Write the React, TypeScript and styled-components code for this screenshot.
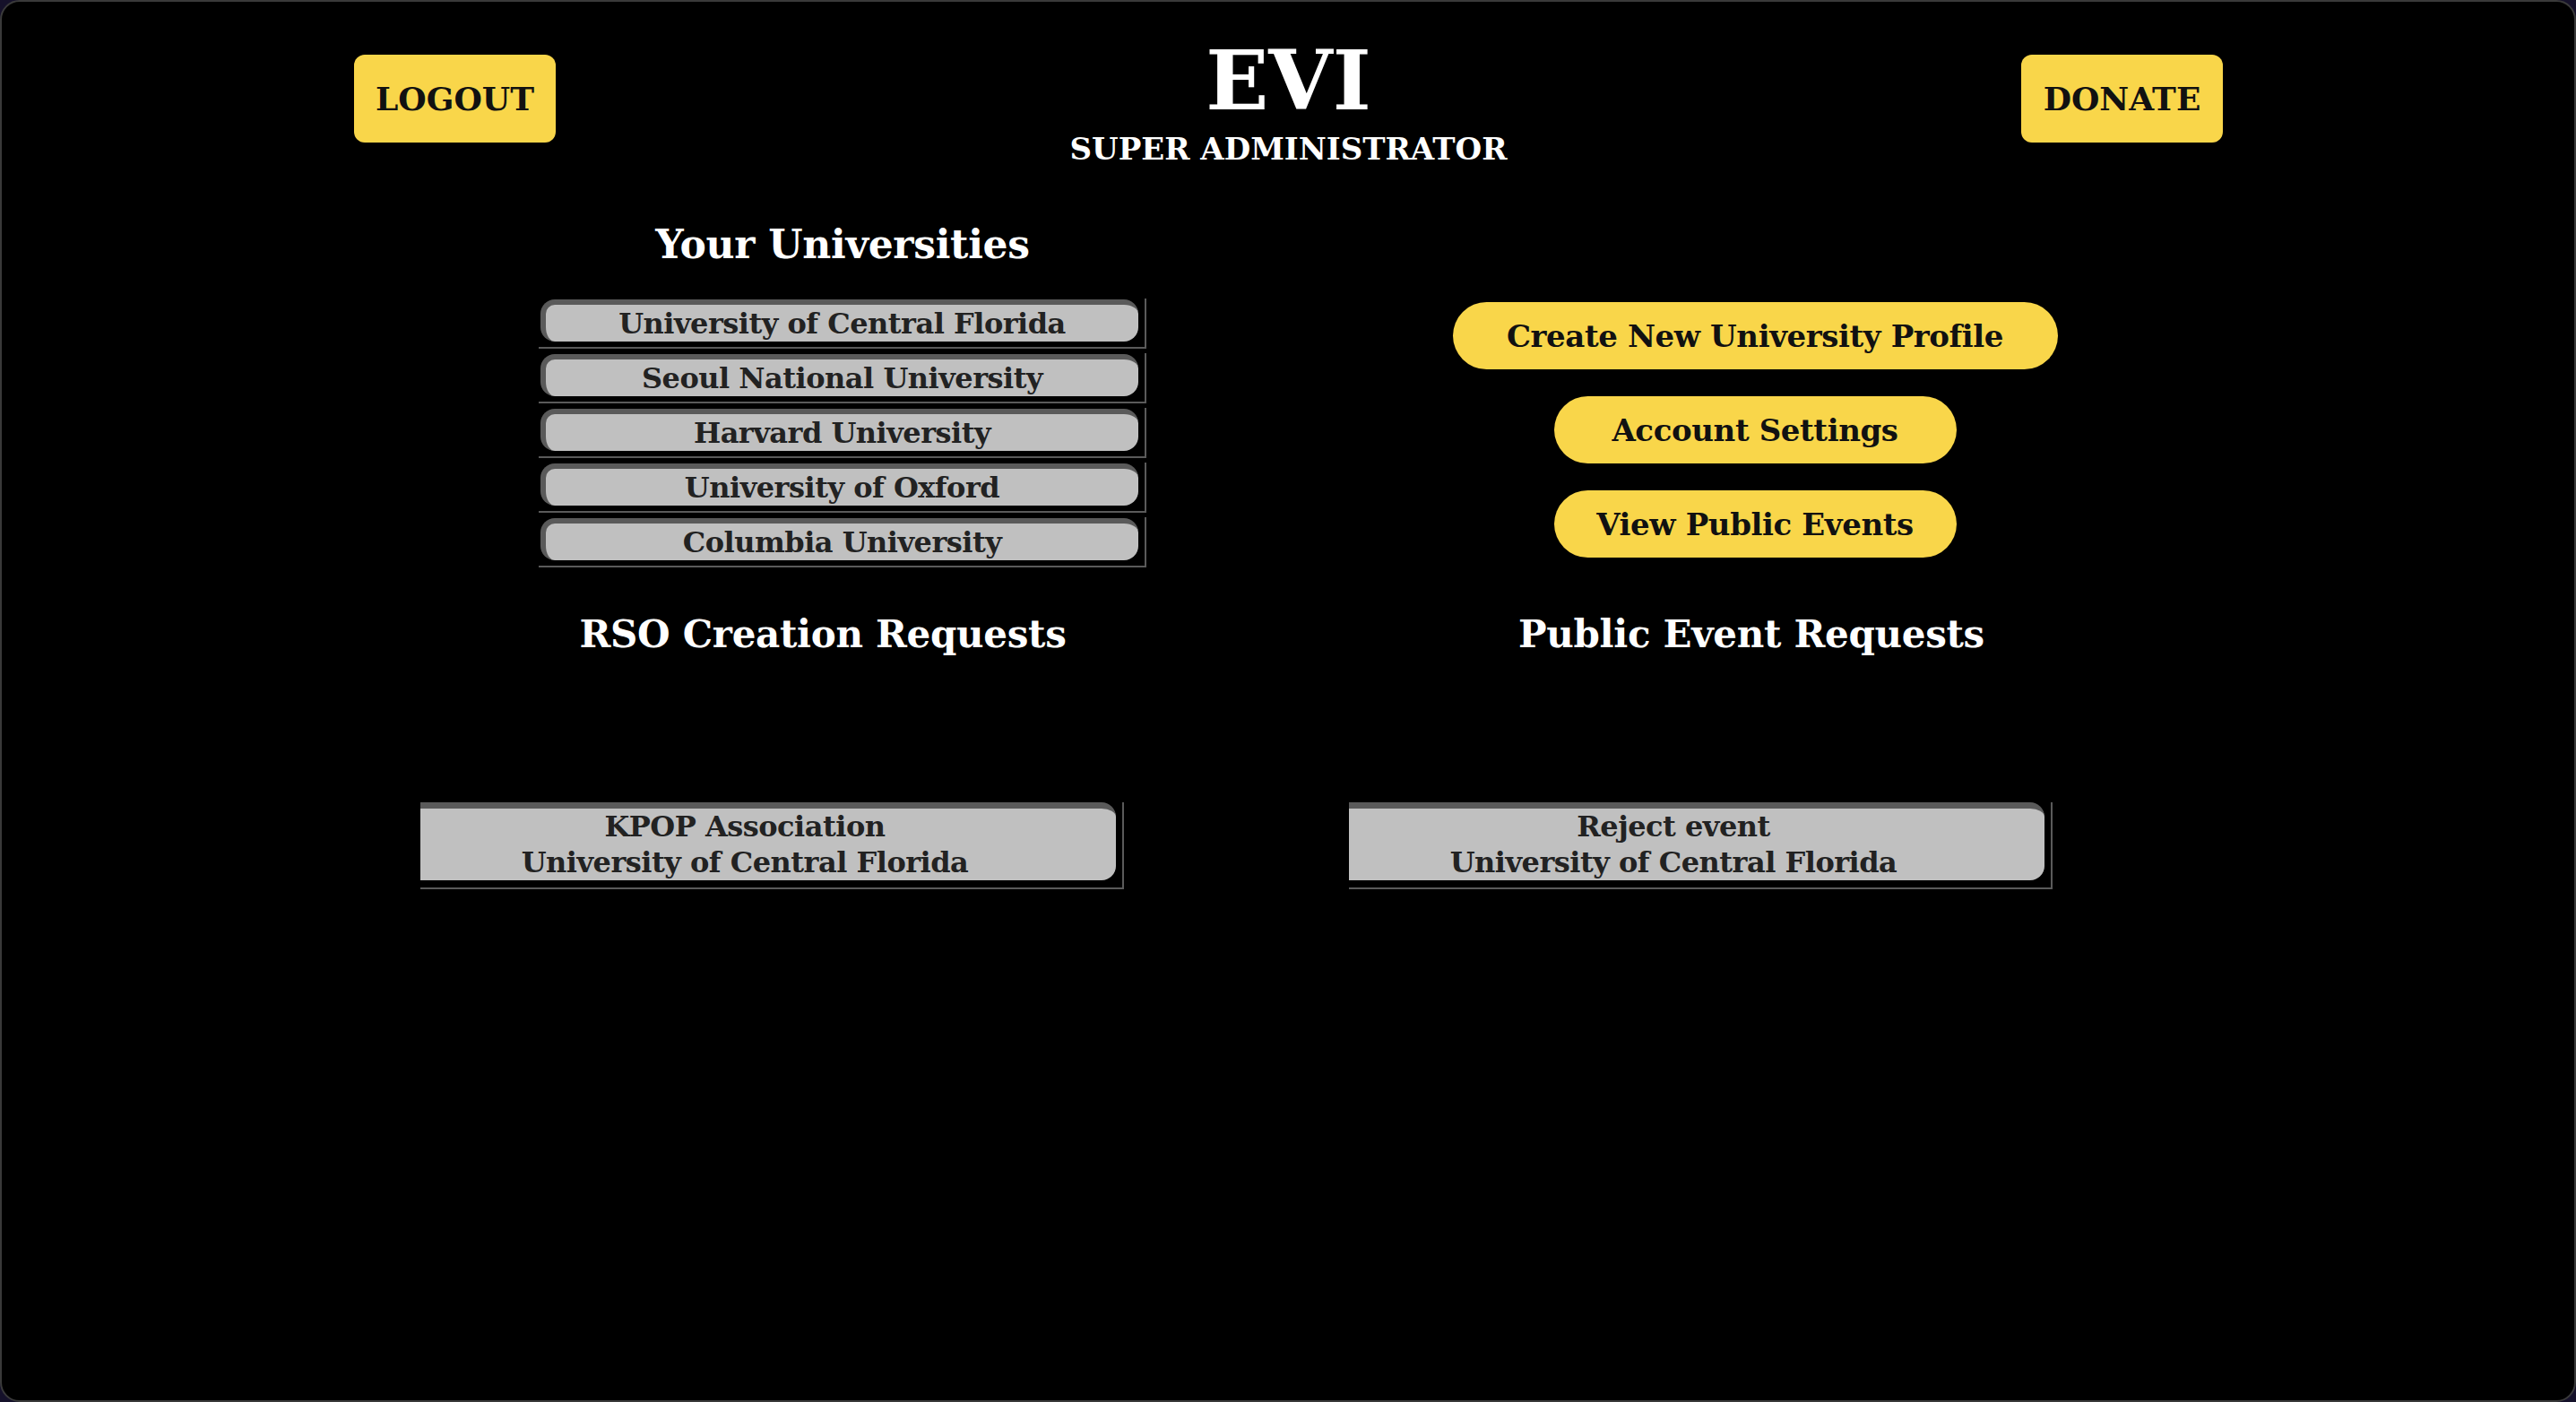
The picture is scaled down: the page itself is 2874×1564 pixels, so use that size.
import styled, { createGlobalStyle } from 'styled-components';

const universities = [
  'University of Central Florida',
  'Seoul National University',
  'Harvard University',
  'University of Oxford',
  'Columbia University',
];

const GlobalStyle = createGlobalStyle`
  html, body {
    margin: 0;
    padding: 0;
    background: #15112a;
  }
`;

const App = () => {
  return (
    <>
      <GlobalStyle />
      <Frame>
        <Header>
          <HeaderButton align="start">LOGOUT</HeaderButton>
          <TitleBlock>
            <Title>EVI</Title>
            <Subtitle>SUPER ADMINISTRATOR</Subtitle>
          </TitleBlock>
          <HeaderButton align="end">DONATE</HeaderButton>
        </Header>

        <TopGrid>
          <Column>
            <SectionTitle size={44}>Your Universities</SectionTitle>
            <UniList>
              {universities.map((u) => (
                <UniRow key={u}>
                  <UniButton>{u}</UniButton>
                </UniRow>
              ))}
            </UniList>
          </Column>
          <ActionColumn>
            <PillButton wide>Create New University Profile</PillButton>
            <PillButton>Account Settings</PillButton>
            <PillButton>View Public Events</PillButton>
          </ActionColumn>
        </TopGrid>

        <LowerGrid>
          <Column>
            <SectionTitle size={42}>RSO Creation Requests</SectionTitle>
            <RequestRow>
              <RequestButton>
                KPOP Association
                <br />
                University of Central Florida
              </RequestButton>
            </RequestRow>
          </Column>
          <Column>
            <SectionTitle size={42}>Public Event Requests</SectionTitle>
            <RequestRow>
              <RequestButton>
                Reject event
                <br />
                University of Central Florida
              </RequestButton>
            </RequestRow>
          </Column>
        </LowerGrid>
      </Frame>
    </>
  );
};

const Frame = styled.div`
  box-sizing: border-box;
  height: 100vh;
  background: #000;
  border: 2px solid #3a3a3a;
  border-radius: 22px;
  overflow: hidden;
  font-family: 'DejaVu Serif', Georgia, serif;
  font-weight: bold;
`;

const Header = styled.header`
  display: grid;
  grid-template-columns: 1fr auto 1fr;
  align-items: start;
  padding: 42px 392px 0 393px;
`;

const HeaderButton = styled.button<{ align: 'start' | 'end' }>`
  justify-self: ${({ align }) => align};
  width: 225px;
  height: 98px;
  margin-top: 17px;
  border: none;
  border-radius: 12px;
  background: #f9d64a;
  color: #111;
  font-family: inherit;
  font-weight: bold;
  font-size: 36px;
  padding: 0;
`;

const TitleBlock = styled.div`
  display: flex;
  flex-direction: column;
  align-items: center;
  color: #fff;
`;

const Title = styled.h1`
  margin: 0;
  font-size: 92px;
  line-height: 1;
`;

const Subtitle = styled.div`
  margin-top: 13px;
  font-size: 34px;
  line-height: 1;
`;

const TopGrid = styled.section`
  display: grid;
  grid-template-columns: 1fr 1fr;
  padding: 0 405px 0 429px;
  margin-top: 68px;
`;

const LowerGrid = styled.section`
  display: grid;
  grid-template-columns: 1fr 1fr;
  padding: 0 400px 0 398px;
  margin-top: 49px;
`;

const Column = styled.div`
  display: flex;
  flex-direction: column;
  align-items: center;
`;

const SectionTitle = styled.h2<{ size: number }>`
  margin: 0;
  color: #fff;
  font-size: ${({ size }) => size}px;
  letter-spacing: -0.3px;
  line-height: 1;
`;

const UniList = styled.div`
  display: flex;
  flex-direction: column;
  width: 678px;
  margin-top: 38px;
`;

const UniRow = styled.div`
  box-sizing: border-box;
  padding: 1px 7px 6px 2px;
  margin-bottom: 5px;
  border-right: 2px solid #5a5a5a;
  border-bottom: 2px solid #5a5a5a;
`;

const UniButton = styled.button`
  display: block;
  box-sizing: border-box;
  width: 100%;
  height: 47px;
  padding: 0;
  background: #c0c0c0;
  border-style: solid;
  border-width: 6px 0 0 6px;
  border-color: #5a5a5a;
  border-radius: 16px;
  color: #222;
  font-family: inherit;
  font-weight: bold;
  font-size: 32px;
  letter-spacing: -0.5px;
  line-height: 1;
`;

const ActionColumn = styled.div`
  display: flex;
  flex-direction: column;
  align-items: center;
  gap: 30px;
  padding-top: 86px;
`;

const PillButton = styled.button<{ wide?: boolean }>`
  height: 75px;
  width: ${({ wide }) => (wide ? '675px' : '449px')};
  padding: 0;
  border: none;
  border-radius: 38px;
  background: #f9d64a;
  color: #111;
  font-family: inherit;
  font-weight: bold;
  font-size: 34px;
  letter-spacing: -0.4px;
`;

const RequestRow = styled.div`
  box-sizing: border-box;
  align-self: flex-start;
  width: 785px;
  margin: 166px 0 0 69px;
  padding: 0 7px 8px 0;
  border-right: 2px solid #5a5a5a;
  border-bottom: 2px solid #5a5a5a;
`;

const RequestButton = styled.button`
  display: block;
  box-sizing: border-box;
  width: 100%;
  height: 87px;
  padding: 0 52px 0 0;
  background: #c0c0c0;
  border: none;
  border-top: 7px solid #5a5a5a;
  border-radius: 0 16px 16px 0;
  color: #222;
  font-family: inherit;
  font-weight: bold;
  font-size: 32px;
  letter-spacing: -0.5px;
  line-height: 40px;
`;

export default App;
